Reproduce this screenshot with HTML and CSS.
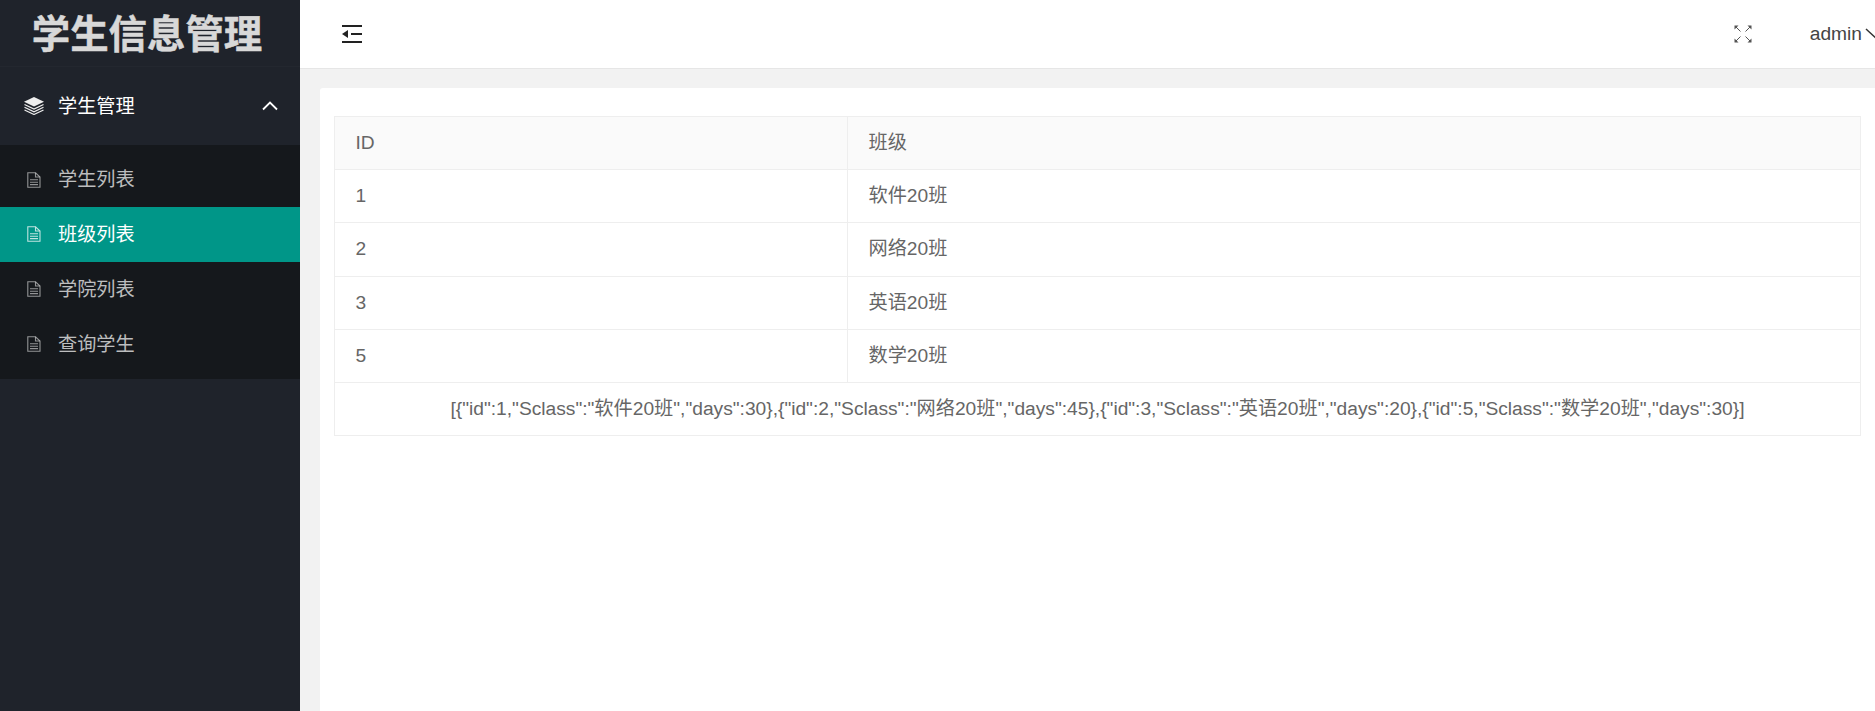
FILE: index.html
```html
<!DOCTYPE html>
<html lang="zh-CN">
<head>
<meta charset="utf-8">
<title>学生信息管理</title>
<link rel="stylesheet" href="styles.css">
</head>
<body>
<div class="app">
  <aside class="side">
    <div class="logo">学生信息管理</div>
    <div class="group">
      <svg class="ico-layers" viewBox="0 0 20 18"><path d="M10 0 20 4.700 10 9.400 0 4.700Z" fill="currentColor"/><path d="M.5 7.500 10 12 19.500 7.500M.5 10.300 10 14.800 19.500 10.300M.5 13 10 17.500 19.500 13" fill="none" stroke="currentColor" stroke-width="1.200"/></svg>
      <span class="group-label">学生管理</span>
      <svg class="ico-chev" viewBox="0 0 16 10"><path d="M1 8.500 8 1.500 15 8.500" fill="none" stroke="currentColor" stroke-width="1.800"/></svg>
    </div>
    <nav class="sub">
      <a class="item first"><svg class="ico-doc" viewBox="0 0 14 16"><use href="#doc"/></svg><span>学生列表</span></a>
      <a class="item active"><svg class="ico-doc" viewBox="0 0 14 16"><use href="#doc"/></svg><span>班级列表</span></a>
      <a class="item"><svg class="ico-doc" viewBox="0 0 14 16"><use href="#doc"/></svg><span>学院列表</span></a>
      <a class="item"><svg class="ico-doc" viewBox="0 0 14 16"><use href="#doc"/></svg><span>查询学生</span></a>
    </nav>
  </aside>
  <div class="main">
    <header class="top">
      <svg class="ico-fold" viewBox="0 0 22 18"><path d="M1 1H21M10 9H21M1 17H21" fill="none" stroke="currentColor" stroke-width="2"/><path d="M1 9 7 5V13Z" fill="currentColor"/></svg>
      <div class="top-right">
        <svg class="ico-full" viewBox="0 0 18 18"><path d="M1.500 1.500 6.500 6.500M16.500 1.500 11.500 6.500M1.500 16.500 6.500 11.500M16.500 16.500 11.500 11.500" fill="none" stroke="currentColor" stroke-width="1"/><path d="M.5.500H4.500L.5 4.500ZM17.500.500V4.500L13.500.500ZM.5 17.500V13.500L4.500 17.500ZM17.500 17.500H13.500L17.500 13.500Z" fill="currentColor"/></svg>
        <span class="user">admin</span>
        <svg class="ico-down" viewBox="0 0 24 12"><path d="M1 1 12 11 23 1" fill="none" stroke="currentColor" stroke-width="1.500"/></svg>
      </div>
    </header>
    <main class="content">
      <section class="card">
        <table class="grid">
          <colgroup><col class="col-id"><col></colgroup>
          <thead><tr><th>ID</th><th>班级</th></tr></thead>
          <tbody>
            <tr><td>1</td><td>软件20班</td></tr>
            <tr><td>2</td><td>网络20班</td></tr>
            <tr><td>3</td><td>英语20班</td></tr>
            <tr><td>5</td><td>数学20班</td></tr>
            <tr><td colspan="2" class="raw">[{"id":1,"Sclass":"软件20班","days":30},{"id":2,"Sclass":"网络20班","days":45},{"id":3,"Sclass":"英语20班","days":20},{"id":5,"Sclass":"数学20班","days":30}]</td></tr>
          </tbody>
        </table>
      </section>
    </main>
  </div>
</div>
<svg class="defs" aria-hidden="true"><defs><g id="doc" fill="none" stroke="currentColor" stroke-width="1.100"><path d="M.8.800H8.500L13 5V15.200H.8Z"/><path d="M8.500.8V5H13M3 7.800H11M3 10.200H11M3 12.600H11"/></g></defs></svg>
</body>
</html>
```

FILE: styles.css
```css
* { box-sizing: border-box; }
html, body { margin: 0; height: 100%; overflow: hidden; }
body { font-family: "Liberation Sans", "Noto Sans CJK SC", sans-serif; font-size: 19.2px; line-height: 24px; color: #666; background: #f2f2f2; }
.defs { display: none; }
.app { display: flex; height: 711px; width: 1875px; }
.side { width: 300px; flex: none; background: #1f232b; color: #fff; }
.logo { height: 67px; line-height: 70px; padding-right: 6px; text-align: center; font-size: 38.4px; font-weight: 700; color: #d8d8d8; -webkit-text-stroke: .5px #d8d8d8; border-bottom: 1px solid #23272f; }
.group { height: 78px; display: flex; align-items: center; padding: 0 22px 0 24px; }
.ico-layers { width: 20px; height: 18px; flex: none; margin-right: 14px; color: #eee; }
.group-label { flex: 1; padding-top: 2px; }
.ico-chev { width: 16px; height: 10px; color: #fff; }
.sub { background: #15181c; padding: 7.200px 0; }
.item { display: flex; align-items: center; height: 54.800px; padding-left: 27px; color: rgba(255,255,255,.72); }
.item span { padding-top: 2px; }
.item.first span { padding-top: 0; }
.item.active { background: #009688; color: #fff; }
.ico-doc { width: 14px; height: 16px; flex: none; margin-right: 17px; opacity: .75; }
.main { flex: 1; min-width: 0; display: flex; flex-direction: column; }
.top { height: 69px; flex: none; background: #fff; border-bottom: 1px solid #e6e6e6; display: flex; align-items: center; padding-left: 41px; position: relative; color: #333; }
.ico-fold { width: 22px; height: 18px; color: #222; }
.top-right { margin-left: auto; display: flex; align-items: center; }
.ico-full { width: 18px; height: 18px; color: #555; margin-right: 58px; }
.user { color: #444; margin-right: 3px; }
.ico-down { width: 24px; height: 12px; flex: none; color: #333; margin-right: -14px; }
.content { flex: 1; padding: 19px 0 0 20px; }
.card { background: #fff; height: 100%; border-radius: 3px 0 0 0; padding: 28px 14px 0 14px; }
.grid { width: 1527px; border-collapse: collapse; table-layout: fixed; background: #fff; }
.col-id { width: 513px; }
th, td { height: 53.200px; padding: 0 20.500px; border: 1px solid #eee; font-weight: 400; text-align: left; }
th { background: #fafafa; }
.grid .raw { text-align: center; padding: 0; }
```
